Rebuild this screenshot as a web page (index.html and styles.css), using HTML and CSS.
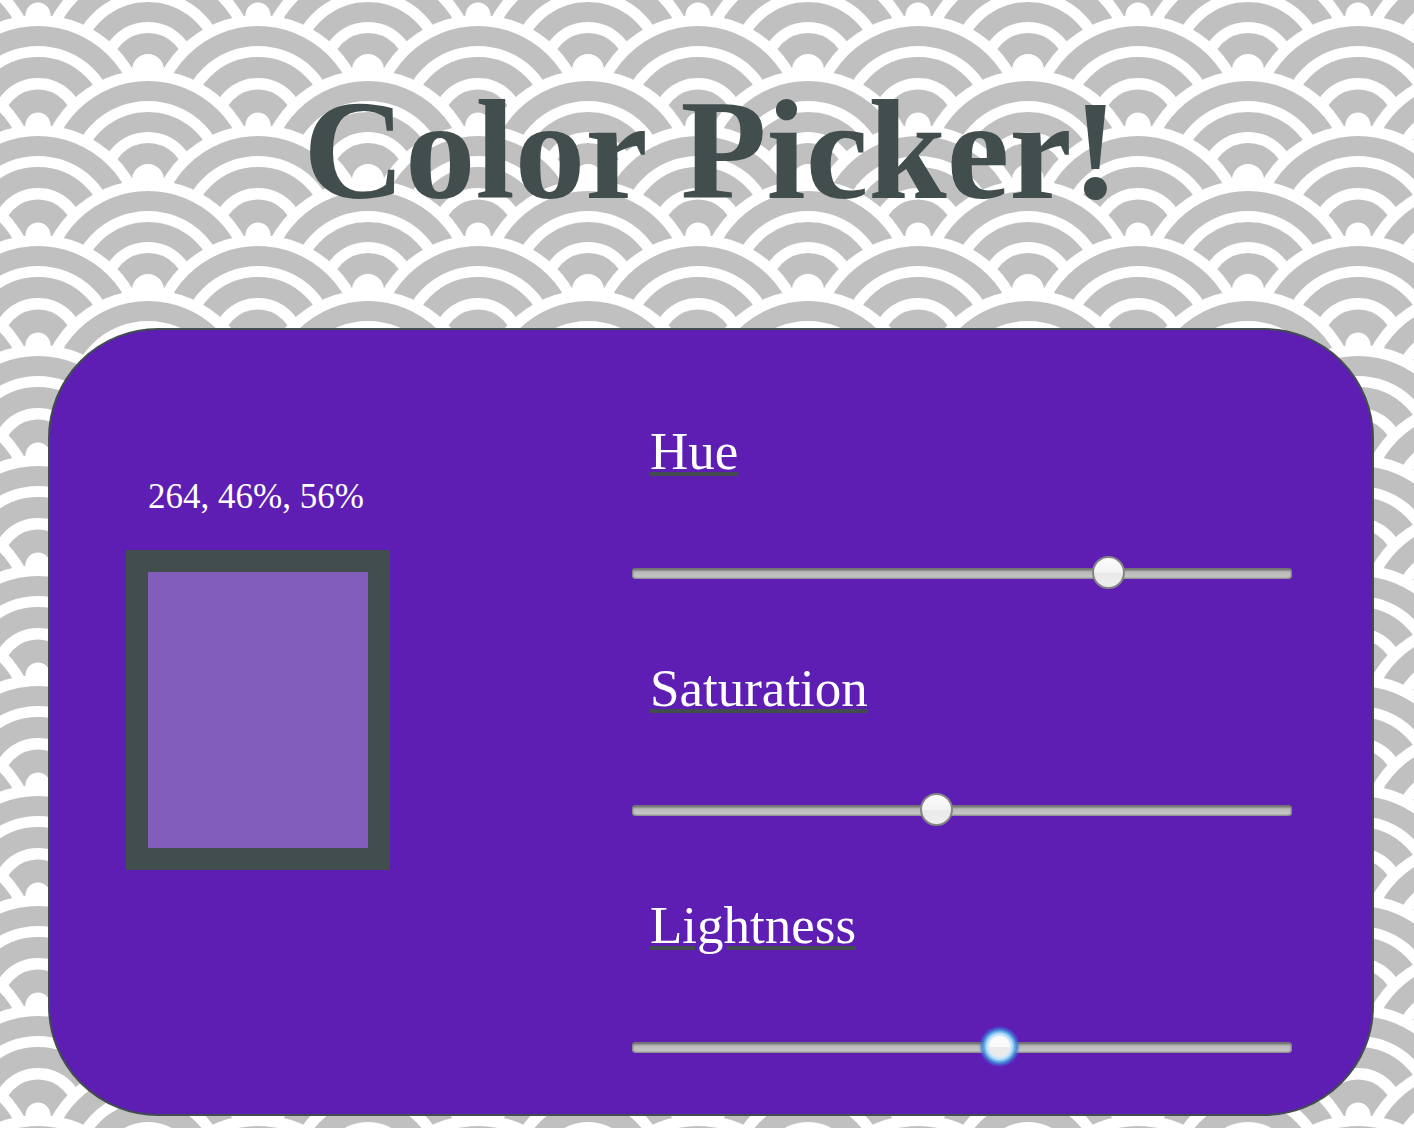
FILE: index.html
```html
<!DOCTYPE html>
<html lang="en">
<head>
<meta charset="utf-8">
<meta name="viewport" content="width=device-width, initial-scale=1">
<title>Color Picker!</title>
<link rel="stylesheet" href="styles.css">
</head>
<body>
<h1 class="title">Color Picker!</h1>
<main class="panel">
  <section class="preview">
    <p class="value">264, 46%, 56%</p>
    <div class="swatch"></div>
  </section>
  <form class="controls">
    <div class="control">
      <label class="name" for="hue">Hue</label>
      <input class="slider" id="hue" type="range" min="0" max="360" value="264">
    </div>
    <div class="control">
      <label class="name" for="saturation">Saturation</label>
      <input class="slider" id="saturation" type="range" min="0" max="100" value="46">
    </div>
    <div class="control">
      <label class="name" for="lightness">Lightness</label>
      <input class="slider active" id="lightness" type="range" min="0" max="100" value="56">
    </div>
  </form>
</main>
</body>
</html>
```
FILE: styles.css
```css
* {
  box-sizing: border-box;
}

body {
  margin: 0;
  padding: 70px 40px 12px 48px;
  font-family: "Liberation Serif", "Times New Roman", serif;
  background-color: #fff;
  background-position: 38px 15px;
  background-size: 220px 110px;
  /* Overlapping waves, one row in front of the next */
  background-image: url("data:image/svg+xml,%3Csvg xmlns='http://www.w3.org/2000/svg' xmlns:xlink='http://www.w3.org/1999/xlink' width='220' height='110' viewBox='0 0 220 110'%3E%3Cdefs%3E%3Cg id='a'%3E%3Ccircle r='110' fill='%23fff'/%3E%3Cg fill='none' stroke='%23c0c0c0'%3E%3Ccircle r='89' stroke-width='20'/%3E%3Ccircle r='58' stroke-width='20'/%3E%3Ccircle r='26.5' stroke-width='21'/%3E%3C/g%3E%3C/g%3E%3Cg id='b'%3E%3Ccircle r='110' fill='%23fff'/%3E%3Cg fill='none' stroke='%23c0c0c0'%3E%3Ccircle r='89' stroke-width='20'/%3E%3Ccircle r='57.5' stroke-width='21'/%3E%3Ccircle r='24' stroke-width='23'/%3E%3C/g%3E%3C/g%3E%3C/defs%3E%3Cuse xlink:href='%23b' x='0' y='0'/%3E%3Cuse xlink:href='%23b' x='220' y='0'/%3E%3Cuse xlink:href='%23a' x='110' y='55'/%3E%3Cuse xlink:href='%23b' x='0' y='110'/%3E%3Cuse xlink:href='%23b' x='220' y='110'/%3E%3Cuse xlink:href='%23a' x='110' y='165'/%3E%3C/svg%3E");
}

.title {
  margin: 0 0 98px;
  color: #414e4d;
  font-size: 141px;
  line-height: 160px;
  text-align: center;
}

.panel {
  display: flex;
  justify-content: space-between;
  gap: 40px;
  padding: 84px 80px 50px 76px;
  color: #fff;
  background: #5e1eb4;
  border: 2px solid #414e4d;
  border-radius: 110px;
}

.preview {
  flex: none;
  padding-top: 63px;
}

.value {
  margin: 0 22px 33px;
  font-size: 35px;
  line-height: 40px;
}

.swatch {
  width: 264px;
  height: 320px;
  background: #835dbb;
  border: 22px solid #414e4d;
}

.controls {
  display: flex;
  flex: 0 1 660px;
  flex-direction: column;
  gap: 61px;
}

.control {
  display: flex;
  flex-direction: column;
  align-items: flex-start;
  gap: 69px;
}

.name {
  margin-left: 18px;
  font-size: 53px;
  line-height: 74px;
  text-decoration: underline #414e4d 4px;
  text-underline-offset: 3px;
}

.slider {
  appearance: none;
  width: 100%;
  height: 33px;
  margin: 0;
  background: none;
  outline: none;
}

.slider::-webkit-slider-runnable-track {
  height: 11px;
  background: linear-gradient(#6e6e6e, #7a7a7a 15%, #a8a8a8 28%, #bababa 40%, #c6c6c6 75%, #a8a8a8);
  border-radius: 4px;
  box-shadow: inset 1px 0 2px #777, inset -1px 0 2px #777;
}

.slider::-webkit-slider-thumb {
  appearance: none;
  width: 33px;
  height: 33px;
  margin-top: -12px;
  background: linear-gradient(#fcfcfc, #f3f3f3 50%, #e9e9e9 51%, #efefef);
  border: 2px solid #858585;
  border-radius: 50%;
}

.slider.active::-webkit-slider-thumb {
  background: radial-gradient(circle, transparent 10px, #d3e9fb 11px, #b5dcf8 13px, #68aeea 15px, #4a93dc 17px), linear-gradient(#fafafa 50%, #ebebeb 51%);
  border: 0;
  box-shadow: 0 0 2px 1px #4488da, 0 0 2px 3px rgba(66, 112, 216, .6);
}
```
